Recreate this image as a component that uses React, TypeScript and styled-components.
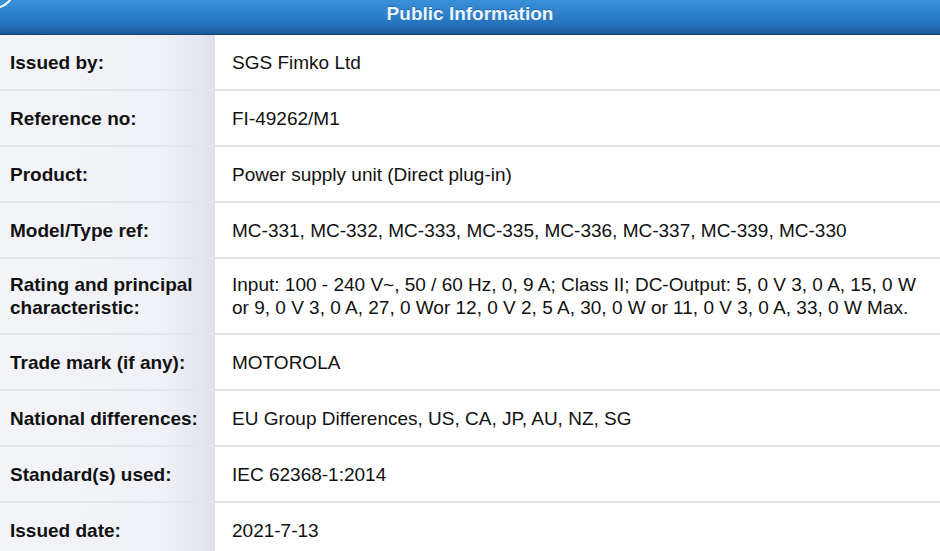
import React from 'react';
import styled, { createGlobalStyle } from 'styled-components';

const GlobalStyle = createGlobalStyle`
  html, body {
    margin: 0;
    padding: 0;
    background: #ffffff;
  }
  body {
    font-family: "Liberation Sans", Arial, sans-serif;
    color: #111;
  }
`;

const Page = styled.div`
  width: 940px;
  height: 551px;
  overflow: hidden;
  position: relative;
`;

const Header = styled.div`
  height: 35px;
  box-sizing: border-box;
  padding-bottom: 6px;
  display: flex;
  align-items: center;
  justify-content: center;
  background: linear-gradient(to bottom, #3891d8 0%, #2d7fca 45%, #2370b8 75%, #1a5996 100%);
  border-bottom: 1px solid #163f6b;
  box-shadow: 0 1px 2px rgba(60, 110, 180, 0.25);
  color: #eaf5fc;
  font-weight: bold;
  font-size: 19px;
  text-shadow: 0 -1px 0 rgba(0, 40, 90, 0.35);
`;

const Ring = styled.svg`
  position: absolute;
  left: 0;
  top: 0;
`;

const Table = styled.div`
  display: grid;
  grid-template-columns: 215px 1fr;
`;

const Label = styled.div<{ $tall?: boolean }>`
  height: ${p => (p.$tall ? 74 : 54)}px;
  padding: 0 10px;
  display: flex;
  align-items: center;
  font-weight: bold;
  font-size: 19px;
  line-height: 23px;
  background: linear-gradient(to right, #f3f4f8 0%, #eff1f6 75%, #e6e8ef 92%, #dcdfe7 100%);
  border-bottom: 2px solid #e4e6ec;
`;

const Value = styled.div<{ $tall?: boolean }>`
  height: ${p => (p.$tall ? 74 : 54)}px;
  padding: 0 17px;
  display: flex;
  flex-direction: column;
  justify-content: center;
  font-size: 19px;
  line-height: 23px;
  white-space: nowrap;
  background: #fff;
  border-bottom: 2px solid #e3e3e3;
`;

const rows: { label: string; value: string[]; tall?: boolean }[] = [
  { label: 'Issued by:', value: ['SGS Fimko Ltd'] },
  { label: 'Reference no:', value: ['FI-49262/M1'] },
  { label: 'Product:', value: ['Power supply unit (Direct plug-in)'] },
  { label: 'Model/Type ref:', value: ['MC-331, MC-332, MC-333, MC-335, MC-336, MC-337, MC-339, MC-330'] },
  {
    label: 'Rating and principal characteristic:',
    value: [
      'Input: 100 - 240 V~, 50 / 60 Hz, 0, 9 A; Class II; DC-Output: 5, 0 V 3, 0 A, 15, 0 W',
      'or 9, 0 V 3, 0 A, 27, 0 Wor 12, 0 V 2, 5 A, 30, 0 W or 11, 0 V 3, 0 A, 33, 0 W Max.',
    ],
    tall: true,
  },
  { label: 'Trade mark (if any):', value: ['MOTOROLA'] },
  { label: 'National differences:', value: ['EU Group Differences, US, CA, JP, AU, NZ, SG'] },
  { label: 'Standard(s) used:', value: ['IEC 62368-1:2014'] },
  { label: 'Issued date:', value: ['2021-7-13'] },
];

export default function App() {
  return (
    <Page>
      <GlobalStyle />
      <Header>Public Information</Header>
      <Ring width="20" height="16" viewBox="0 0 20 16">
        <circle cx="-6" cy="-12" r="20" fill="none" stroke="#e8f2fa" strokeWidth="2.2" />
      </Ring>
      <Table>
        {rows.map(r => (
          <React.Fragment key={r.label}>
            <Label $tall={r.tall}>{r.label}</Label>
            <Value $tall={r.tall}>
              {r.value.map(line => (
                <span key={line}>{line}</span>
              ))}
            </Value>
          </React.Fragment>
        ))}
      </Table>
    </Page>
  );
}
